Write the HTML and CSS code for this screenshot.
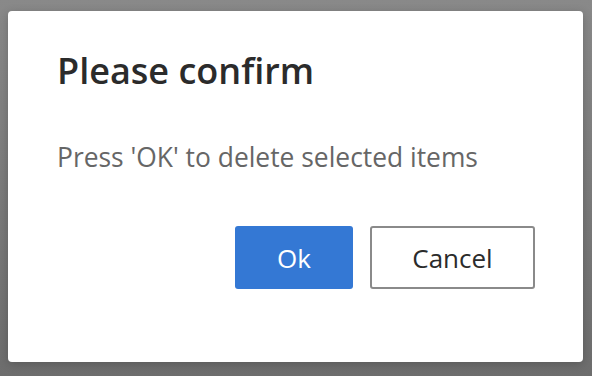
FILE: index.html
```html
<!DOCTYPE html>
<html lang="en">
<head>
  <meta charset="UTF-8">
  <title>Please confirm</title>
  <link rel="stylesheet" href="styles.css">
</head>
<body>

<!-- Confirm dialog over a dimmed page -->
<div class="dialog" role="dialog">
  <h1 class="dialog-title">Please confirm</h1>
  <p class="dialog-text">Press 'OK' to delete selected items</p>
  <div class="dialog-actions">
    <button class="btn btn-primary">Ok</button>
    <button class="btn btn-secondary">Cancel</button>
  </div>
</div>

</body>
</html>
```

FILE: styles.css
```css
body {
  margin: 0;
  padding: 11px 9px 0 8px;
  height: 376px;
  box-sizing: border-box;
  background: linear-gradient(to bottom, #898989, #6d6d6d);
  font-family: "Open Sans", "Noto Sans", sans-serif;
  overflow: hidden;
}

.dialog {
  background: #fff;
  border-radius: 4px;
  height: 351px;
  box-sizing: border-box;
  padding: 38px 48px 0 49px;
  box-shadow: 0 2px 10px rgba(0, 0, 0, 0.2);
}

.dialog-title {
  margin: 0;
  font-size: 36px;
  font-weight: 600;
  color: #2b2b2b;
  line-height: 44px;
}

.dialog-text {
  margin: 46px 0 0;
  font-size: 26.4px;
  color: #666;
  line-height: 36px;
}

.dialog-actions {
  display: flex;
  justify-content: flex-end;
  gap: 17px;
  margin-top: 51px;
}

.btn {
  height: 63px;
  font-family: inherit;
  font-size: 26px;
  border-radius: 3px;
  cursor: pointer;
}

.btn-primary {
  width: 118px;
  background: #3478d4;
  border: none;
  color: #fff;
}

.btn-secondary {
  width: 165px;
  background: #fff;
  border: 2px solid #8a8a8a;
  color: #2b2b2b;
}
```
